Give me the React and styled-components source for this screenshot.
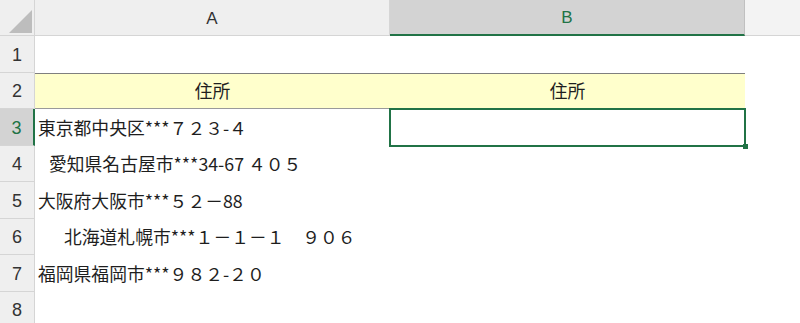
import React from "react";
import styled, { createGlobalStyle, css } from "styled-components";

const GREEN = "#217346";

const rows = [
    { no: 1, a: "", b: "" },
    { no: 2, a: "住所", b: "住所", heading: true },
    { no: 3, a: "東京都中央区***７２３-４", b: "", selected: true },
    { no: 4, a: "愛知県名古屋市***34-67 ４０５", indent: 11 },
    { no: 5, a: "大阪府大阪市***５２－88" },
    { no: 6, a: "北海道札幌市***１－１－１　９０６", indent: 26 },
    { no: 7, a: "福岡県福岡市***９８２-２０" },
    { no: 8, a: "" },
];

const App = () => (
    <>
        <GlobalStyle />
        <Sheet>
            <HeaderRow>
                <Corner>
                    <svg width="35" height="36" viewBox="0 0 35 36">
                        <polygon points="32,10 32,33 9,33" fill="#bdbdbd" />
                    </svg>
                </Corner>
                <ColHeader>A</ColHeader>
                <ColHeader $selected>B</ColHeader>
                <HeaderFiller />
            </HeaderRow>
            {rows.map((row) => (
                <Row key={row.no}>
                    <RowHeader $selected={row.selected}>{row.no}</RowHeader>
                    <Cell $heading={row.heading} $indent={row.indent}>
                        {row.a}
                    </Cell>
                    <Cell $heading={row.heading} $selected={row.selected}>
                        {row.b}
                    </Cell>
                    <Filler />
                </Row>
            ))}
        </Sheet>
    </>
);

export default App;

// Styled Components
const GlobalStyle = createGlobalStyle`
    html, body {
        margin: 0;
        padding: 0;
        background: #ffffff;
        overflow: hidden;
    }
`;

const Sheet = styled.div`
    width: 800px;
    height: 323px;
    overflow: hidden;
    display: flex;
    flex-direction: column;
    font-family: "Noto Sans CJK JP", "Noto Sans", sans-serif;
    color: #1e1e1e;
`;

const HeaderRow = styled.div`
    display: flex;
    height: 36px;
    flex-shrink: 0;
    background: #efefef;
    border-bottom: 1px solid #d5d5d5;
    box-sizing: border-box;
`;

const Corner = styled.div`
    width: 35px;
    flex-shrink: 0;
    border-right: 1px solid #d5d5d5;
    box-sizing: border-box;

    svg {
        display: block;
    }
`;

const ColHeader = styled.div`
    width: 355px;
    flex-shrink: 0;
    box-sizing: border-box;
    display: flex;
    align-items: center;
    justify-content: center;
    padding-top: 2px;
    font-family: "Liberation Sans", Arial, sans-serif;
    font-size: 17px;
    color: #333333;
    border-right: 1px solid #d5d5d5;

    ${(p) =>
        p.$selected &&
        css`
            background: #d3d3d3;
            color: ${GREEN};
            border-bottom: 2px solid ${GREEN};
            margin-bottom: -1px;
            border-right-color: #c0c0c0;
        `}
`;

const HeaderFiller = styled.div`
    flex: 1;
    background: #f3f3f3;
`;

const Row = styled.div`
    display: flex;
    height: 36.5px;
    flex-shrink: 0;
`;

const RowHeader = styled.div`
    width: 35px;
    flex-shrink: 0;
    box-sizing: border-box;
    display: flex;
    align-items: center;
    justify-content: center;
    padding-top: 3px;
    background: #efefef;
    border-right: 1px solid #d5d5d5;
    border-bottom: 1px solid #d5d5d5;
    font-family: "Liberation Sans", Arial, sans-serif;
    font-size: 18px;
    color: #333333;

    ${(p) =>
        p.$selected &&
        css`
            background: #d3d3d3;
            color: ${GREEN};
            border-right: 2px solid ${GREEN};
        `}
`;

const Cell = styled.div`
    position: relative;
    width: 355px;
    flex-shrink: 0;
    box-sizing: border-box;
    display: flex;
    align-items: center;
    padding-left: ${(p) => 3 + (p.$indent || 0)}px;
    padding-bottom: 1px;
    font-size: 17.8px;
    white-space: pre;

    ${(p) =>
        p.$heading &&
        css`
            justify-content: center;
            padding-left: 0;
            background: #ffffcc;
            border-top: 1px solid #7f7f7f;
            border-bottom: 1px solid #9a9a9a;
        `}

    ${(p) =>
        p.$selected &&
        css`
            &::after {
                content: "";
                position: absolute;
                left: -1px;
                top: -1px;
                right: -1px;
                bottom: -1px;
                border: 2px solid ${GREEN};
            }

            &::before {
                content: "";
                position: absolute;
                right: -3px;
                bottom: -3px;
                width: 5px;
                height: 5px;
                background: ${GREEN};
                z-index: 1;
            }
        `}
`;

const Filler = styled.div`
    flex: 1;
`;
